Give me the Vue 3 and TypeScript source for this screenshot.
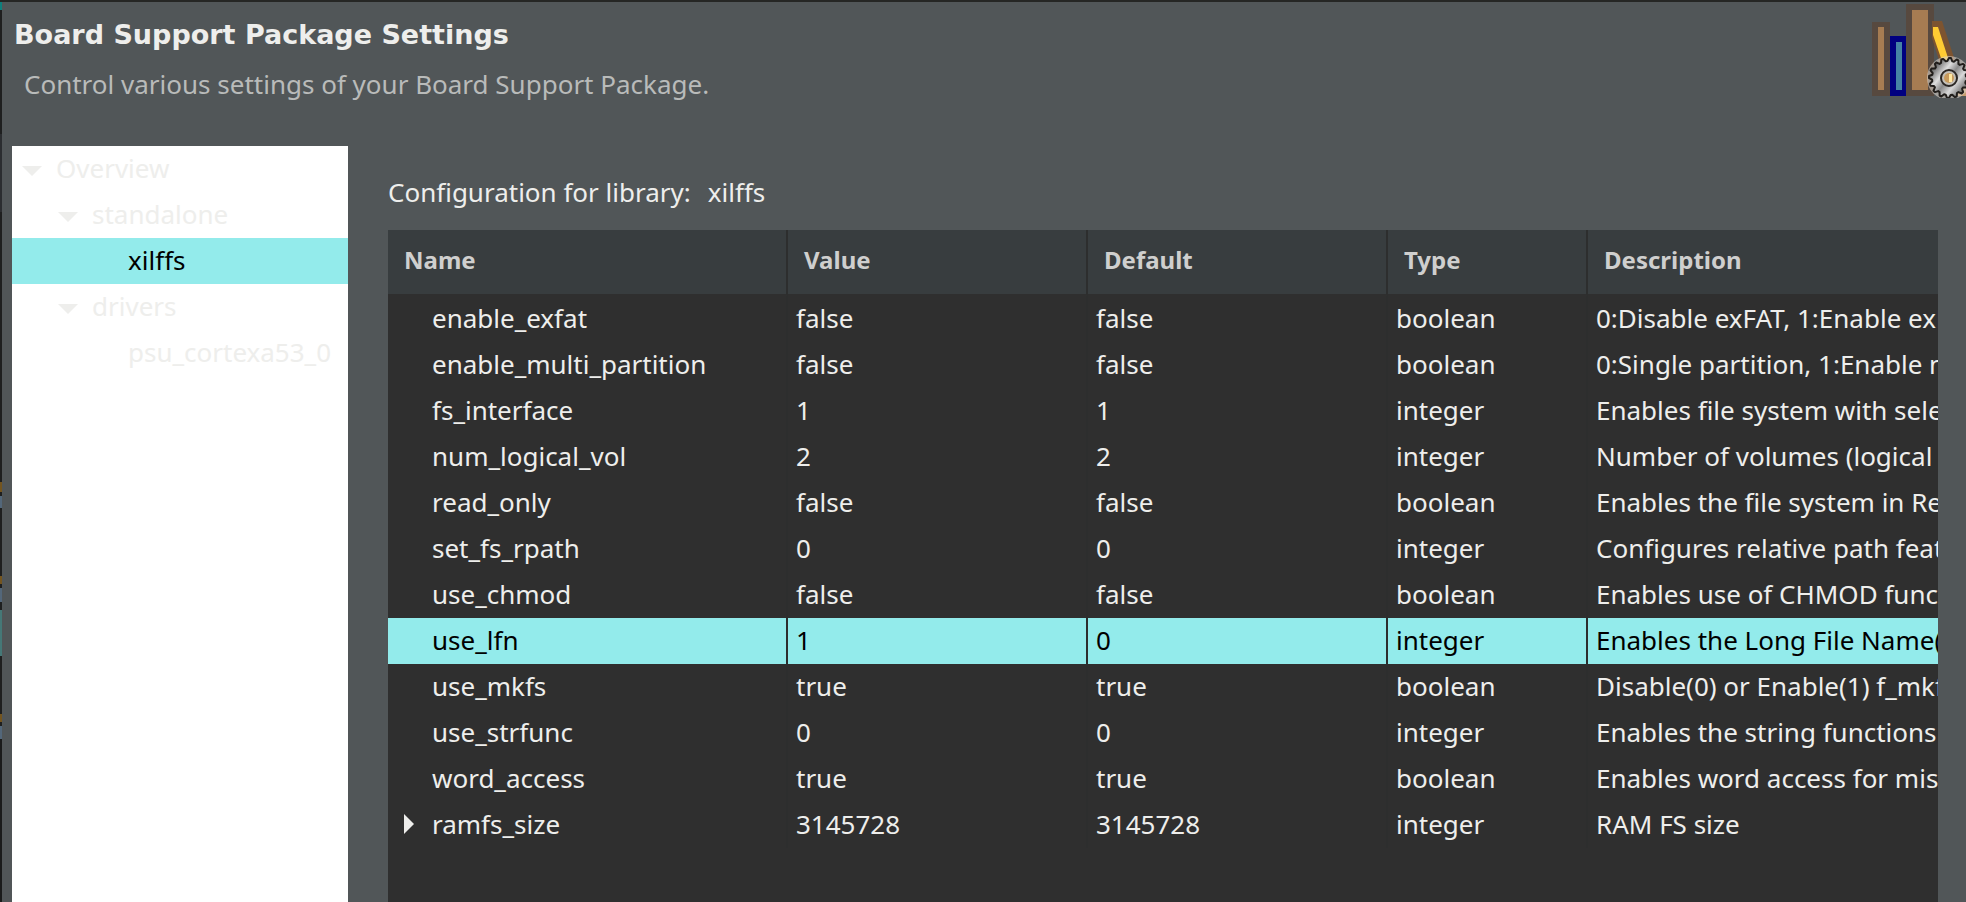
<script setup lang="ts">
import { ref } from 'vue'

interface TreeNode {
  label: string
  depth: number
  expanded: boolean
}

interface Setting {
  name: string
  value: string
  fallback: string
  type: 'boolean' | 'integer'
  description: string
  expandable?: boolean
}

const nodes: TreeNode[] = [
  { label: 'Overview', depth: 0, expanded: true },
  { label: 'standalone', depth: 1, expanded: true },
  { label: 'xilffs', depth: 2, expanded: false },
  { label: 'drivers', depth: 1, expanded: true },
  { label: 'psu_cortexa53_0', depth: 2, expanded: false },
]

const settings: Setting[] = [
  { name: 'enable_exfat', value: 'false', fallback: 'false', type: 'boolean', description: '0:Disable exFAT, 1:Enable exFAT' },
  { name: 'enable_multi_partition', value: 'false', fallback: 'false', type: 'boolean', description: '0:Single partition, 1:Enable multi' },
  { name: 'fs_interface', value: '1', fallback: '1', type: 'integer', description: 'Enables file system with selected' },
  { name: 'num_logical_vol', value: '2', fallback: '2', type: 'integer', description: 'Number of volumes (logical drives)' },
  { name: 'read_only', value: 'false', fallback: 'false', type: 'boolean', description: 'Enables the file system in Read' },
  { name: 'set_fs_rpath', value: '0', fallback: '0', type: 'integer', description: 'Configures relative path feature' },
  { name: 'use_chmod', value: 'false', fallback: 'false', type: 'boolean', description: 'Enables use of CHMOD functionality' },
  { name: 'use_lfn', value: '1', fallback: '0', type: 'integer', description: 'Enables the Long File Name(LFN)' },
  { name: 'use_mkfs', value: 'true', fallback: 'true', type: 'boolean', description: 'Disable(0) or Enable(1) f_mkfs' },
  { name: 'use_strfunc', value: '0', fallback: '0', type: 'integer', description: 'Enables the string functions' },
  { name: 'word_access', value: 'true', fallback: 'true', type: 'boolean', description: 'Enables word access for misaligned' },
  { name: 'ramfs_size', value: '3145728', fallback: '3145728', type: 'integer', description: 'RAM FS size', expandable: true },
]

const headings = ['Name', 'Value', 'Default', 'Type', 'Description']
const selectedNode = ref('xilffs')
const selectedSetting = ref('use_lfn')

/** Outline of a cog: four points per tooth, two on the rim and two in the gap. */
function cogOutline(cx: number, cy: number, teeth: number, inner: number, outer: number): string {
  const points: string[] = []
  for (let i = 0; i < teeth * 4; i++) {
    const angle = (i / (teeth * 4)) * Math.PI * 2
    const radius = i % 4 < 2 ? outer : inner
    points.push(`${(cx + radius * Math.cos(angle)).toFixed(1)},${(cy + radius * Math.sin(angle)).toFixed(1)}`)
  }
  return points.join(' ')
}

const cog = cogOutline(103, 78, 16, 17, 20)
</script>

<template>
  <div class="window">
    <header class="banner">
      <div class="banner-text">
        <h1>Board Support Package Settings</h1>
        <p>Control various settings of your Board Support Package.</p>
      </div>
      <svg class="logo" viewBox="26 4 94 94" aria-hidden="true">
        <defs>
          <linearGradient id="steel" gradientUnits="userSpaceOnUse" x1="88" y1="66" x2="118" y2="90">
            <stop offset="0" stop-color="#5c5c5c" />
            <stop offset=".3" stop-color="#dedede" />
            <stop offset=".5" stop-color="#8a8a8a" />
            <stop offset=".72" stop-color="#d8d8d8" />
            <stop offset="1" stop-color="#6a6a6a" />
          </linearGradient>
        </defs>
        <path d="M26 22h18v74H26z" fill="#57493f" />
        <path d="M32 27h6v63h-6z" fill="#a67c52" />
        <path d="M60 4h28v92H60z" fill="#57493f" />
        <path d="M66 10h16v80H66z" fill="#a67c52" />
        <path d="M44 36h16v60H44z" fill="#000080" />
        <path d="M50 42h6v48h-6z" fill="#4682a4" />
        <path d="M86 21h10l18 55H98L86 38z" fill="#7d5430" />
        <path d="M87 27h5l11 34h-7L87 35z" fill="#ffcc33" />
        <path d="M112 88h8v8h-8z" fill="#c69c6d" />
        <circle cx="103" cy="78" r="22" fill="#d9d2ca" opacity=".6" />
        <polygon :points="cog" fill="url(#steel)" stroke="#211e1b" stroke-width="2" stroke-linejoin="round" />
        <circle cx="103" cy="78" r="8" fill="#c4c0b8" stroke="#2b2724" stroke-width="2" />
        <circle cx="103" cy="78" r="5" fill="#c79a5c" />
        <path d="M103 74h3v8h-3z" fill="#ffe7a0" />
      </svg>
    </header>

    <div class="content">
      <nav class="tree" aria-label="Settings categories">
        <button
          v-for="node in nodes"
          :key="node.label"
          type="button"
          class="node"
          :class="['depth-' + node.depth, { selected: node.label === selectedNode }]"
          @click="selectedNode = node.label"
        >
          <svg class="arrow" viewBox="0 0 20 10" aria-hidden="true">
            <path v-if="node.expanded" d="M0 0h20L10 10z" />
          </svg>
          <span>{{ node.label }}</span>
        </button>
      </nav>

      <main class="panel">
        <h2><span>Configuration for library:</span><span>xilffs</span></h2>
        <div class="grid">
          <table>
            <colgroup>
              <col class="col-name" />
              <col class="col-value" />
              <col class="col-value" />
              <col class="col-type" />
              <col />
            </colgroup>
            <thead>
              <tr>
                <th v-for="heading in headings" :key="heading" scope="col">{{ heading }}</th>
              </tr>
            </thead>
            <tbody>
              <tr
                v-for="item in settings"
                :key="item.name"
                :class="{ selected: item.name === selectedSetting }"
                @click="selectedSetting = item.name"
              >
                <td class="name">
                  <div>
                    <svg class="closed" viewBox="0 0 10 20" aria-hidden="true">
                      <path v-if="item.expandable" d="M0 0v20l10-10z" />
                    </svg>
                    <span>{{ item.name }}</span>
                  </div>
                </td>
                <td>{{ item.value }}</td>
                <td>{{ item.fallback }}</td>
                <td>{{ item.type }}</td>
                <td>{{ item.description }}</td>
              </tr>
            </tbody>
          </table>
        </div>
      </main>
    </div>
  </div>
</template>

<style>
body {
  margin: 0;
  background: #515658;
}
</style>

<style scoped>
/* The left edge shows a sliver of the editor window behind the dialog. */
.window {
  box-sizing: border-box;
  display: flex;
  flex-direction: column;
  height: 100vh;
  min-height: 600px;
  overflow: hidden;
  padding-left: 2px;
  border-top: 2px solid #252624;
  background:
    linear-gradient(
      #0f7f7c 0 8px, #1e1f1f 8px 132px, #2b2d30 132px 210px, #1e1f1f 210px 480px,
      #74551f 480px 490px, #1e1f1f 490px 494px, #53677a 494px 506px, #1e1f1f 506px 574px,
      #74551f 574px 582px, #1e1f1f 582px 586px, #53677a 586px 600px, #1e1f1f 600px 608px,
      #457877 608px 654px, #1e1f1f 654px 712px, #74551f 712px 720px, #1e1f1f 720px 724px,
      #53677a 724px 737px, #1a1b1b 737px
    ) 0 0 / 2px 100% no-repeat,
    #515658;
  color: #eeeeec;
  font-family: "Noto Sans", "Open Sans", sans-serif;
  font-size: 26px;
  line-height: 44px;
}

.banner {
  display: flex;
  justify-content: space-between;
  height: 144px;
}

.banner-text {
  padding: 8px 12px;
}

h1 {
  margin: 0;
  font: bold 27px/50px "DejaVu Sans", sans-serif;
}

.banner p {
  margin: 2px 0 0 10px;
  color: #b9bbba;
}

.logo {
  flex: none;
  width: 94px;
  height: 94px;
  margin-top: 2px;
}

.content {
  display: flex;
  flex: 1;
  gap: 40px;
  min-height: 0;
  padding: 0 28px 0 10px;
}

.tree {
  flex: 0 0 336px;
  background: #fff;
}

.node {
  display: flex;
  align-items: flex-start;
  gap: 14px;
  width: 100%;
  height: 46px;
  padding: 0 0 0 10px;
  border: 0;
  background: none;
  color: #eeeeec;
  font: inherit;
  text-align: left;
}

.depth-1 {
  padding-left: 46px;
}

.depth-2 {
  padding-left: 82px;
}

.selected {
  background: #93ebeb;
  color: #000;
}

.arrow {
  flex: none;
  width: 20px;
  height: 10px;
  margin-top: 20px;
  fill: currentColor;
}

.panel {
  display: flex;
  flex: 1;
  flex-direction: column;
  min-width: 0;
}

h2 {
  display: flex;
  gap: 17px;
  margin: 24px 0 16px;
  font-size: inherit;
  font-weight: normal;
}

.grid {
  flex: 1;
  min-height: 0;
  overflow: hidden;
  background: #2f2f2f;
}

table {
  width: 100%;
  border-spacing: 0;
  table-layout: fixed;
}

.col-name {
  width: 400px;
}

.col-value {
  width: 300px;
}

.col-type {
  width: 200px;
}

th,
td {
  overflow: hidden;
  padding: 0 8px;
  border-right: 2px solid #2d2e2e;
  text-align: left;
  white-space: nowrap;
}

th:last-child,
td:last-child {
  padding-right: 0;
  border-right: 0;
}

th {
  height: 60px;
  padding-bottom: 4px;
  padding-left: 16px;
  border-bottom: 2px solid #2f2f2f;
  background: #383d3f;
  color: #cfcfce;
  font-size: 24px;
}

td {
  height: 44px;
  padding-bottom: 2px;
}

.name {
  padding-left: 16px;
}

.name div {
  display: flex;
  align-items: center;
  gap: 18px;
}

.closed {
  flex: none;
  width: 10px;
  height: 20px;
  fill: currentColor;
}
</style>
